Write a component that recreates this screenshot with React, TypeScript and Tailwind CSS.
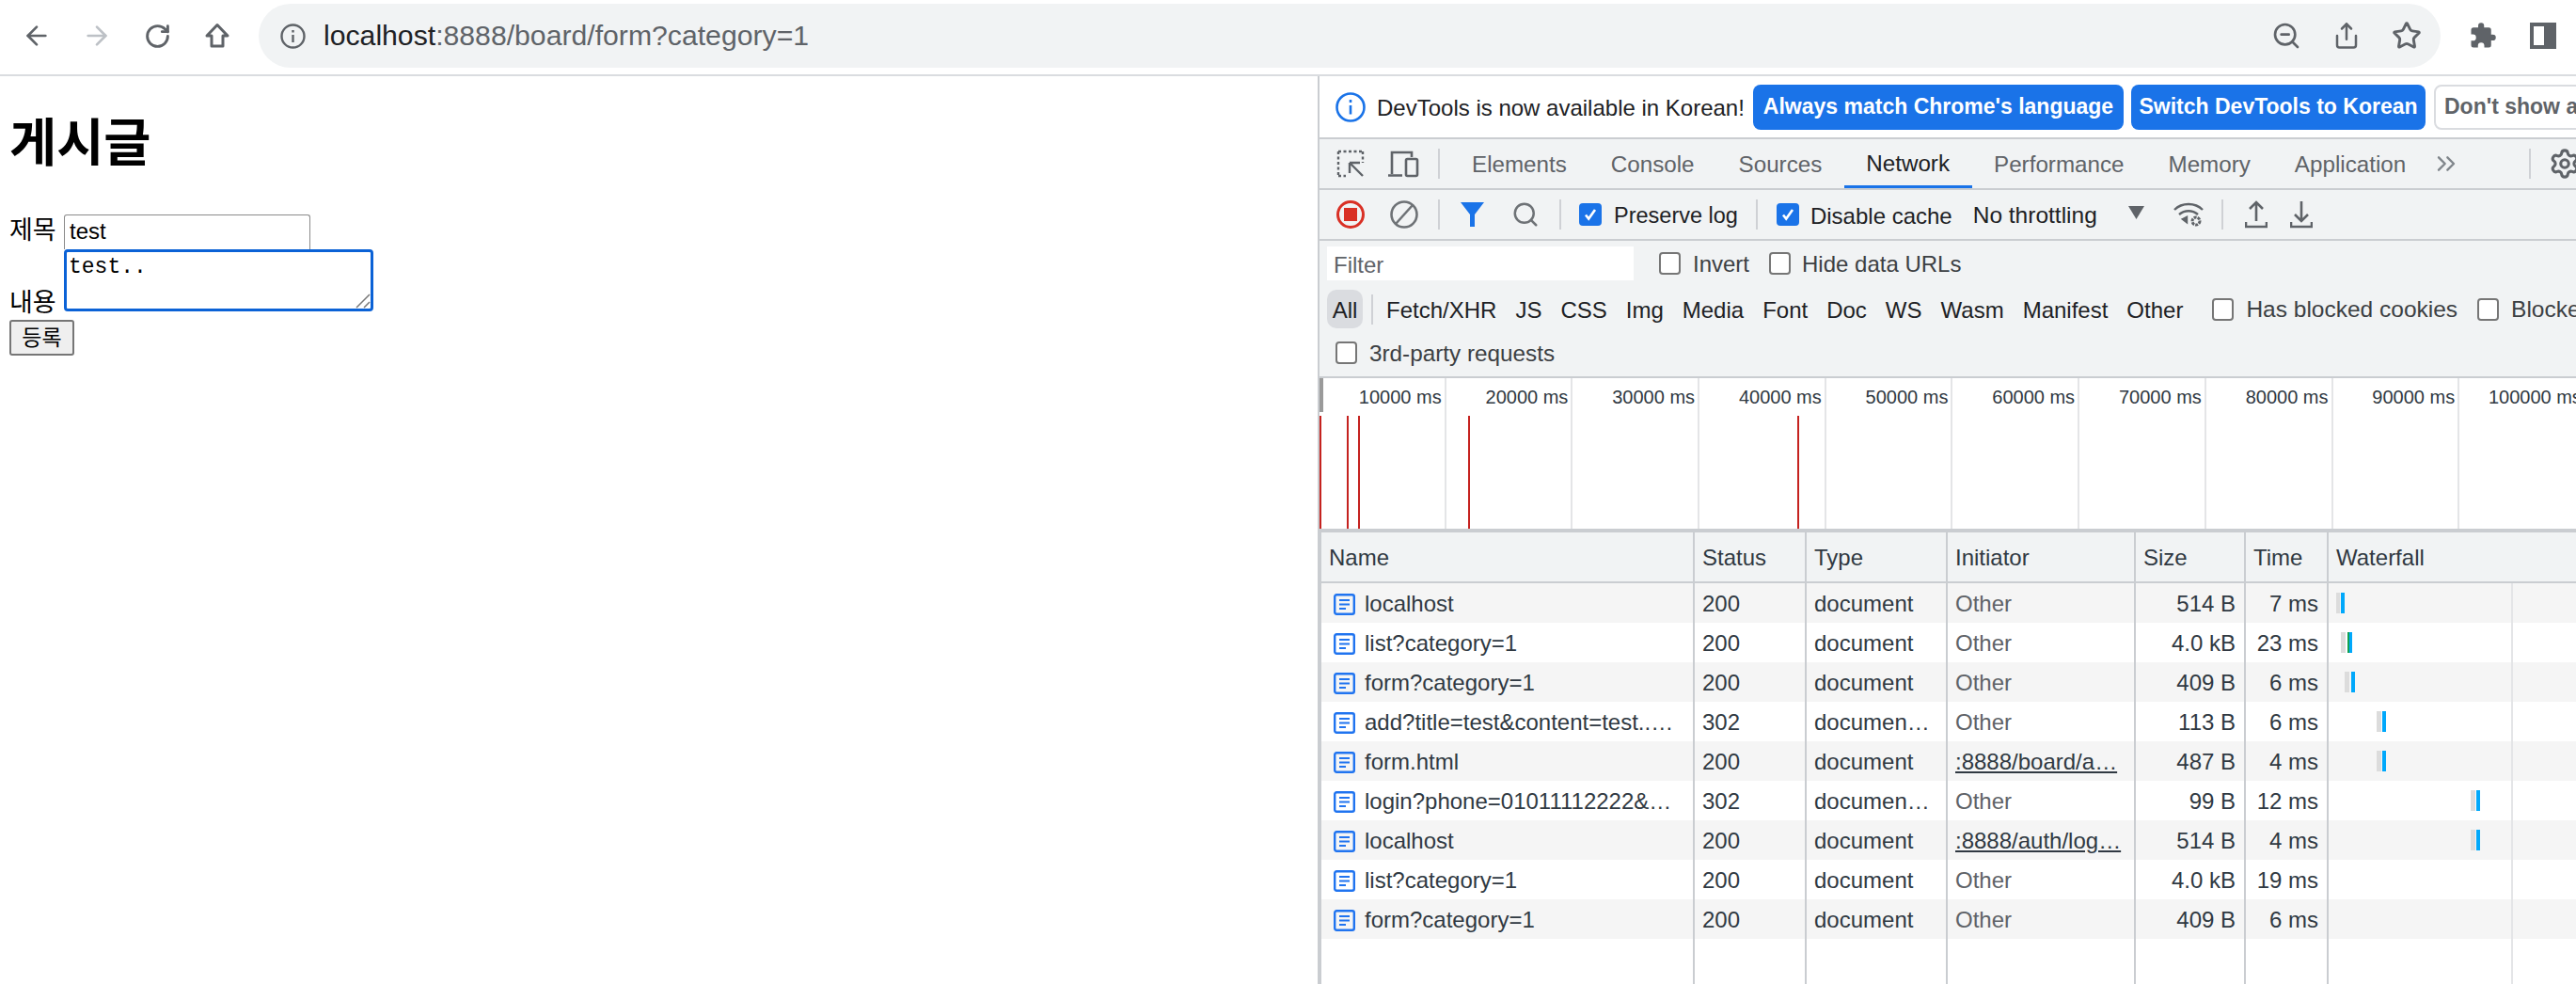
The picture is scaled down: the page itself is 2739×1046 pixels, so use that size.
import { ArrowLeft, ArrowRight, ChevronsRight, RotateCw, Search, Settings, Share, Star, ZoomOut } from "lucide-react";

const tabs = ["Elements", "Console", "Sources", "Network", "Performance", "Memory", "Application"];
const chips = ["Fetch/XHR", "JS", "CSS", "Img", "Media", "Font", "Doc", "WS", "Wasm", "Manifest", "Other"];
const ticks = [10000, 20000, 30000, 40000, 50000, 60000, 70000, 80000, 90000, 100000];

type Bar = { left: number; width: number; color: string };

const grey = "#dcdcdc";
const blue = "#00a8fb";

const rows: {
  name: string;
  status: string;
  type: string;
  initiator: string;
  link?: boolean;
  size: string;
  time: string;
  bars: Bar[];
}[] = [
  {
    name: "localhost",
    status: "200",
    type: "document",
    initiator: "Other",
    size: "514 B",
    time: "7 ms",
    bars: [
      { left: 8, width: 4, color: grey },
      { left: 13, width: 4, color: blue },
    ],
  },
  {
    name: "list?category=1",
    status: "200",
    type: "document",
    initiator: "Other",
    size: "4.0 kB",
    time: "23 ms",
    bars: [
      { left: 13, width: 5, color: grey },
      { left: 20, width: 2, color: "#12a150" },
      { left: 22, width: 3, color: blue },
    ],
  },
  {
    name: "form?category=1",
    status: "200",
    type: "document",
    initiator: "Other",
    size: "409 B",
    time: "6 ms",
    bars: [
      { left: 17, width: 5, color: grey },
      { left: 24, width: 4, color: blue },
    ],
  },
  {
    name: "add?title=test&content=test..…",
    status: "302",
    type: "documen…",
    initiator: "Other",
    size: "113 B",
    time: "6 ms",
    bars: [
      { left: 51, width: 5, color: grey },
      { left: 57, width: 4, color: blue },
    ],
  },
  {
    name: "form.html",
    status: "200",
    type: "document",
    initiator: ":8888/board/a…",
    link: true,
    size: "487 B",
    time: "4 ms",
    bars: [
      { left: 51, width: 5, color: grey },
      { left: 57, width: 4, color: blue },
    ],
  },
  {
    name: "login?phone=01011112222&…",
    status: "302",
    type: "documen…",
    initiator: "Other",
    size: "99 B",
    time: "12 ms",
    bars: [
      { left: 151, width: 5, color: grey },
      { left: 157, width: 4, color: blue },
    ],
  },
  {
    name: "localhost",
    status: "200",
    type: "document",
    initiator: ":8888/auth/log…",
    link: true,
    size: "514 B",
    time: "4 ms",
    bars: [
      { left: 151, width: 5, color: grey },
      { left: 157, width: 4, color: blue },
    ],
  },
  { name: "list?category=1", status: "200", type: "document", initiator: "Other", size: "4.0 kB", time: "19 ms", bars: [] },
  { name: "form?category=1", status: "200", type: "document", initiator: "Other", size: "409 B", time: "6 ms", bars: [] },
];

function Separator({ className }: { className: string }) {
  return <div className={`h-8 w-[2px] shrink-0 bg-[#cfd1d5] ${className}`} />;
}

function CheckBox({ checked, className }: { checked?: boolean; className?: string }) {
  if (checked) {
    return (
      <span className={`flex h-6 w-6 shrink-0 items-center justify-center rounded-[4px] bg-[#1a73e8] ${className ?? ""}`}>
        <svg width="16" height="16" viewBox="0 0 16 16" fill="none" stroke="#fff" strokeWidth="2.6">
          <path d="M3 8.5l3.2 4L13 3" />
        </svg>
      </span>
    );
  }
  return <span className={`h-6 w-[23px] shrink-0 rounded-[4px] border-2 border-[#767676] bg-white ${className ?? ""}`} />;
}

function FileIcon() {
  return (
    <svg width="23" height="23" viewBox="0 0 23 23" fill="none" stroke="#2074f0" className="shrink-0">
      <rect x="1.2" y="1.2" width="20.600" height="20.600" rx="2" strokeWidth="2.4" />
      <path d="M6 7h11M6 11.500h11M6 16h7" strokeWidth="2.200" />
    </svg>
  );
}

function BrowserBar() {
  return (
    <div className="flex h-[81px] shrink-0 items-start border-b-2 border-[#dadce0] bg-white pt-1">
      <div className="flex h-[68px] w-[275px] shrink-0 items-center pl-[7px] text-[#5f6368]">
        <div className="flex w-[64px] justify-center">
          <ArrowLeft size={32} strokeWidth={2} />
        </div>
        <div className="flex w-[64px] justify-center text-[#bdc1c6]">
          <ArrowRight size={32} strokeWidth={2} />
        </div>
        <div className="flex w-[64px] justify-center">
          <RotateCw size={29} strokeWidth={2.4} />
        </div>
        <div className="flex w-[64px] justify-center">
          <svg width="28" height="28" viewBox="0 0 28 28" fill="none" stroke="#5f6368" strokeWidth="3" strokeLinejoin="round">
            <path d="M14 2.500L25 14h-5v11H8V14H3z" />
          </svg>
        </div>
      </div>
      <div className="flex h-[68px] w-[2320px] shrink-0 items-center rounded-full bg-[#f1f3f4] pl-[23px] text-[30.2px] text-[#5f6368]">
        <svg width="27" height="27" viewBox="0 0 27 27" fill="none" stroke="#5f6368" strokeWidth="2.4" className="shrink-0">
          <circle cx="13.5" cy="13.5" r="12" />
          <path d="M13.5 12v8M13.5 7v2.600" />
        </svg>
        <div className="ml-[19px] w-[2071px] whitespace-nowrap">
          <span className="text-[#202124]">localhost</span>:8888/board/form?category=1
        </div>
        <ZoomOut size={32} strokeWidth={2} />
        <Share size={30} strokeWidth={2} className="ml-[33px]" />
        <Star size={32} strokeWidth={2.2} className="ml-[33px]" />
      </div>
      <div className="flex h-[68px] items-center pl-[30px]">
        <svg width="30" height="30" viewBox="0 0 24 24" fill="#5f6368">
          <path d="M20.5 11H19V7a2 2 0 0 0-2-2h-4V3.500a2.500 2.500 0 0 0-5 0V5H4a2 2 0 0 0-2 2v3.800h1.500a2.700 2.700 0 0 1 0 5.400H2V20a2 2 0 0 0 2 2h3.800v-1.500a2.700 2.700 0 0 1 5.400 0V22H17a2 2 0 0 0 2-2v-4h1.500a2.500 2.500 0 0 0 0-5z" />
        </svg>
        <div className="ml-[35px] flex h-7 w-7 justify-end border-[4px] border-[#5f6368] bg-white">
          <div className="h-full w-[9px] bg-[#5f6368]" />
        </div>
      </div>
    </div>
  );
}

function BoardForm() {
  return (
    <div className="w-[1401px] shrink-0 bg-white pl-[10px] text-black">
      <h1 className="mt-[44px] text-[54.5px] leading-[56px] font-bold">게시글</h1>
      <div className="mt-[47px] flex items-end">
        <label className="mb-1 w-[58px] text-[27px] leading-[32px]">제목</label>
        <input
          readOnly
          defaultValue="test"
          className="h-[37px] w-[262px] rounded-t-[3px] border-[1.5px] border-b-0 border-[#8a8a8a] px-[5px] pb-[2px] text-[24px] outline-none"
        />
      </div>
      <div className="flex items-end">
        <label className="-mb-[7px] w-[58px] text-[27px] leading-[32px]">내용</label>
        <div className="relative h-[66px] w-[329px]">
          <textarea
            readOnly
            defaultValue="test.."
            className="block h-full w-full resize-none rounded-[4px] border-[3px] border-[#0b62d6] px-[2px] pt-[3px] font-['Liberation_Mono',monospace] text-[23px] leading-[27px] outline-none"
          />
          <svg width="16" height="16" viewBox="0 0 16 16" stroke="#777" strokeWidth="1.5" className="absolute right-[3px] bottom-[3px]">
            <path d="M1 15L15 1M9 15l6-6" />
          </svg>
        </div>
      </div>
      <button className="mt-[9px] flex h-[38px] w-[69px] items-center justify-center rounded-[3px] border-2 border-[#767676] bg-[#efefef] text-[23px]">
        등록
      </button>
    </div>
  );
}

function InfoBar() {
  return (
    <div className="flex h-[67px] shrink-0 items-center overflow-hidden border-b-2 border-[#cacdd1] bg-white pl-[17px] whitespace-nowrap">
      <svg width="32" height="32" viewBox="0 0 32 32" fill="none" stroke="#1a73e8" strokeWidth="2.6" className="shrink-0">
        <circle cx="16" cy="16" r="14.500" />
        <path d="M16 14v9.500M16 8v3" />
      </svg>
      <span className="ml-[12px] w-[400px] shrink-0 pt-[2px] text-[24px] text-[#202124]">DevTools is now available in Korean!</span>
      <div className="flex h-12 w-[394px] shrink-0 items-center justify-center rounded-lg bg-[#1a73e8] text-[23px] font-bold text-white">
        Always match Chrome's language
      </div>
      <div className="ml-2 flex h-12 w-[313px] shrink-0 items-center justify-center rounded-lg bg-[#1a73e8] text-[23px] font-bold text-white">
        Switch DevTools to Korean
      </div>
      <div className="ml-[9px] flex h-12 w-[300px] shrink-0 items-center rounded-lg border-2 border-[#dadce0] pl-[9px] text-[23px] font-bold text-[#5f6368]">
        Don't show again
      </div>
    </div>
  );
}

function TabBar() {
  return (
    <div className="flex h-[54px] shrink-0 items-center overflow-hidden border-b-2 border-[#cacdd1] pl-1 whitespace-nowrap text-[#5f6368]">
      <div className="flex w-[57px] shrink-0 justify-center">
        <svg width="30" height="30" viewBox="0 0 30 30" fill="none" stroke="#5f6368" strokeWidth="2.4">
          <path d="M2 2h26M2 2v26M2 28h8M28 2v12" strokeDasharray="3 2.500" />
          <path d="M14 14h11M14 14v11M15 15l13 13" />
        </svg>
      </div>
      <div className="flex w-[57px] shrink-0 justify-center">
        <svg width="34" height="30" viewBox="0 0 34 30" fill="none" stroke="#5f6368" strokeWidth="2.6">
          <path d="M4 26V3h21v5M0 27.500h15" />
          <rect x="19" y="10" width="12" height="18" rx="1.500" />
        </svg>
      </div>
      <Separator className="ml-2" />
      <div className="ml-[10.5px] flex h-full items-center text-[24.2px]">
        {tabs.map((tab) => (
          <div
            key={tab}
            className={`flex h-full items-center px-[23.5px] pt-[2px] ${tab === "Network" ? "-mb-[2px] border-b-[4px] border-[#1a73e8] text-[#202124]" : ""}`}
          >
            {tab}
          </div>
        ))}
      </div>
      <ChevronsRight size={32} strokeWidth={1.8} className="ml-[3px] shrink-0 text-[#80868b]" />
      <Separator className="ml-[72px]" />
      <Settings size={34} strokeWidth={2.2} className="ml-[19px] shrink-0" fill="#f1f3f4" />
    </div>
  );
}

function NetworkToolbar() {
  return (
    <div className="flex h-[54px] shrink-0 items-center border-b-2 border-[#cacdd1] pl-1 whitespace-nowrap text-[#202124]">
      <div className="flex w-[57px] shrink-0 justify-center">
        <div className="flex h-[30px] w-[30px] items-center justify-center rounded-full border-[3px] border-[#d93025]">
          <div className="h-3.5 w-3.5 bg-[#d93025]" />
        </div>
      </div>
      <div className="flex w-[57px] shrink-0 justify-center">
        <svg width="30" height="30" viewBox="0 0 30 30" fill="none" stroke="#6e7276" strokeWidth="2.6">
          <circle cx="15" cy="15" r="13.500" />
          <path d="M24 5L6 25" />
        </svg>
      </div>
      <Separator className="ml-2" />
      <div className="ml-[5.5px] flex w-[57px] shrink-0 justify-center">
        <svg width="25" height="26" viewBox="0 0 25 26" fill="#1a73e8">
          <path d="M0 0h25L15 13v13h-5V13z" />
        </svg>
      </div>
      <div className="flex w-[57px] shrink-0 justify-center">
        <Search size={30} strokeWidth={2} className="text-[#6e7276]" />
      </div>
      <Separator className="ml-[7.5px]" />
      <CheckBox checked className="ml-[19px]" />
      <span className="ml-[13px] pt-[3px]">Preserve log</span>
      <Separator className="ml-[19px]" />
      <CheckBox checked className="ml-5" />
      <span className="ml-3 pt-[3px] text-[24px]">Disable cache</span>
      <span className="ml-[22px] pt-[3px] text-[24.5px]">No throttling</span>
      <svg width="17" height="14" viewBox="0 0 17 14" fill="#5f6368" className="mb-1 ml-[33px] shrink-0">
        <path d="M0 0h17L8.500 14z" />
      </svg>
      <svg width="32" height="28" viewBox="0 0 32 28" fill="none" stroke="#5f6368" strokeWidth="2.4" className="ml-[31px] shrink-0">
        <path d="M1 9c8-8 22-8 30 0M6 14c6-5 14-5 20 0" />
        <path d="M10 19l4-2v5z" fill="#5f6368" />
        <circle cx="24" cy="21" r="4" strokeWidth="3" strokeDasharray="3 1" />
      </svg>
      <Separator className="ml-[19px]" />
      <svg width="24" height="30" viewBox="0 0 24 30" fill="none" stroke="#5f6368" strokeWidth="2.6" className="ml-[23px] shrink-0">
        <path d="M12 22V2M5 9l7-7 7 7M1 23v5h22v-5" />
      </svg>
      <svg width="24" height="30" viewBox="0 0 24 30" fill="none" stroke="#5f6368" strokeWidth="2.6" className="ml-6 shrink-0">
        <path d="M12 1v21M5 15l7 7 7-7M1 23v5h22v-5" />
      </svg>
    </div>
  );
}

function FilterBar() {
  return (
    <div className="flex h-[146px] shrink-0 flex-col overflow-hidden border-b-2 border-[#cacdd1] pt-[6px] text-[24px] whitespace-nowrap text-[#202124]">
      <div className="flex h-9 items-center pl-2">
        <div className="flex h-9 w-[326px] shrink-0 items-center bg-white pt-[3px] pl-[7px] text-[#5f6368]">Filter</div>
        <CheckBox className="ml-[27px]" />
        <span className="ml-[13px] pt-[2px] text-[#3c4043]">Invert</span>
        <CheckBox className="ml-[21px]" />
        <span className="ml-[12px] pt-[2px] text-[#3c4043]">Hide data URLs</span>
      </div>
      <div className="mt-[10px] flex h-[41px] items-center pl-2">
        <div className="flex h-[41px] w-[38px] shrink-0 items-center justify-center rounded-[10px] bg-[#dadce0] pt-[2px]">All</div>
        <div className="ml-[9px] h-8 w-[2px] shrink-0 bg-[#cfd1d5]" />
        <div className="ml-[14px] flex gap-[20px] pt-[2px]">
          {chips.map((chip) => (
            <span key={chip}>{chip}</span>
          ))}
        </div>
        <CheckBox className="ml-[31px]" />
        <span className="ml-[13px] pt-[2px] text-[24.5px] text-[#3c4043]">Has blocked cookies</span>
        <CheckBox className="ml-[21px]" />
        <span className="ml-[13px] pt-[2px] text-[24.5px] text-[#3c4043]">Blocked Requests</span>
      </div>
      <div className="mt-[14px] flex h-6 items-center pl-[17px]">
        <CheckBox />
        <span className="ml-[13px] pt-[2px] text-[24.3px] text-[#3c4043]">3rd-party requests</span>
      </div>
    </div>
  );
}

function Timeline() {
  return (
    <div className="relative flex h-[164px] shrink-0 overflow-hidden border-b-4 border-[#cacdd1] bg-white">
      {ticks.map((tick) => (
        <div
          key={tick}
          className="h-full w-[134.7px] shrink-0 border-r-2 border-[#e4e5e7] pr-[3px] text-right text-[20px] leading-[40px] whitespace-nowrap text-[#303942]"
        >
          {tick} ms
        </div>
      ))}
      <svg className="absolute inset-0 h-full w-full" fill="#c5221f">
        <rect x="0" y="0" width="4" height="36" fill="#9a9a9a" />
        <rect x="0" y="40" width="2" height="120" />
        <rect x="29" y="40" width="2" height="120" />
        <rect x="41" y="40" width="2" height="120" />
        <rect x="158" y="40" width="2" height="120" />
        <rect x="508" y="40" width="2" height="120" />
      </svg>
    </div>
  );
}

function NetworkTable() {
  const columns = [
    { title: "Name", width: "w-[397px]", cell: "text-[#303942]" },
    { title: "Status", width: "w-[119px]", cell: "pl-2 text-[#303942]" },
    { title: "Type", width: "w-[150px]", cell: "pl-2 text-[#303942]" },
    { title: "Initiator", width: "w-[200px]", cell: "pl-2" },
    { title: "Size", width: "w-[117px]", cell: "justify-end pr-[9px] text-[#303942]" },
    { title: "Time", width: "w-[88px]", cell: "justify-end pr-[9px] text-[#303942]" },
  ];

  const cellText = (column: string, row: (typeof rows)[number]) => {
    if (column === "Status") return row.status;
    if (column === "Type") return row.type;
    if (column === "Size") return row.size;
    if (column === "Time") return row.time;
    if (column === "Initiator") {
      return row.link ? (
        <span className="text-[#303942] underline">{row.initiator}</span>
      ) : (
        <span className="text-[#5f6368]">{row.initiator}</span>
      );
    }
    return (
      <>
        <FileIcon />
        <span className="ml-[10px]">{row.name}</span>
      </>
    );
  };

  return (
    <div className="flex min-h-0 flex-1 overflow-hidden border-l-2 border-[#cacdd1] bg-white text-[24px] whitespace-nowrap">
      {columns.map((column) => (
        <div key={column.title} className={`shrink-0 border-r-2 border-[#cacdd1] ${column.width}`}>
          <div className="flex h-[54px] items-center border-b-2 border-[#cacdd1] bg-[#f1f3f4] pt-[2px] pl-2 text-[#303942]">{column.title}</div>
          {rows.map((row, i) => (
            <div
              key={i}
              className={`flex h-[42px] items-center pt-[2px] ${column.title === "Name" ? "pl-[13px]" : ""} ${column.cell} ${i % 2 === 0 ? "bg-[#f5f5f5]" : "bg-white"}`}
            >
              {cellText(column.title, row)}
            </div>
          ))}
        </div>
      ))}
      <div className="relative min-w-0 flex-1">
        <div className="flex h-[54px] items-center border-b-2 border-[#cacdd1] bg-[#f1f3f4] pt-[2px] pl-2 text-[#303942]">Waterfall</div>
        {rows.map((row, i) => (
          <div key={i} className={`relative h-[42px] ${i % 2 === 0 ? "bg-[#f5f5f5]" : "bg-white"}`}>
            {row.bars.map((bar) => (
              <span
                key={bar.left}
                className="absolute top-[10px] h-[22px]"
                style={{ left: bar.left, width: bar.width, backgroundColor: bar.color }}
              />
            ))}
          </div>
        ))}
        <div className="absolute top-[54px] bottom-0 left-[194px] w-[2px] bg-[#e4e5e7]" />
      </div>
    </div>
  );
}

export default function App() {
  return (
    <div className="flex h-screen w-full flex-col overflow-hidden bg-white font-['Liberation_Sans','Noto_Sans_CJK_KR',sans-serif]">
      <BrowserBar />
      <div className="flex min-h-0 flex-1">
        <BoardForm />
        <div className="flex min-w-0 flex-1 flex-col border-l-2 border-[#cacdd1] bg-[#f1f3f4] text-[23.5px]">
          <InfoBar />
          <TabBar />
          <NetworkToolbar />
          <FilterBar />
          <Timeline />
          <NetworkTable />
        </div>
      </div>
    </div>
  );
}
